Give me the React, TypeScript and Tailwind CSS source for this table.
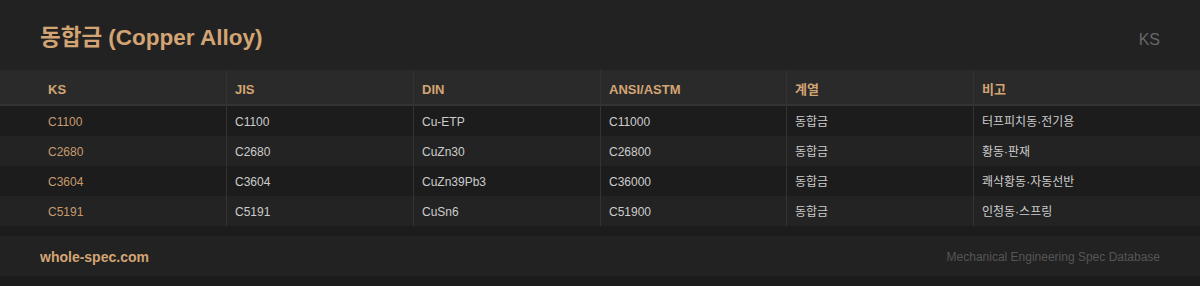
import React from "react";

const rows = [
  ["C1100", "C1100", "Cu-ETP", "C11000", "동합금", "터프피치동·전기용"],
  ["C2680", "C2680", "CuZn30", "C26800", "동합금", "황동·판재"],
  ["C3604", "C3604", "CuZn39Pb3", "C36000", "동합금", "쾌삭황동·자동선반"],
  ["C5191", "C5191", "CuSn6", "C51900", "동합금", "인청동·스프링"],
];
const heads = ["KS", "JIS", "DIN", "ANSI/ASTM", "계열", "비고"];
const cols = "grid grid-cols-[226px_187px_187px_186px_187px_227px]";

export default function App() {
  return (
    <div
      className="w-[1200px] h-[286px] bg-[#1c1c1c] flex flex-col"
      style={{ fontFamily: '"Liberation Sans", "Noto Sans CJK KR", sans-serif' }}
    >
      <div className="h-[70px] bg-[#222222] flex items-baseline justify-between px-10 pt-[22px]">
        <div className="text-[22.5px] leading-[32px] font-bold text-[#d4a574]">동합금 (Copper Alloy)</div>
        <div className="text-[16px] text-[#666666]">KS</div>
      </div>
      <div className={`${cols} h-[36px] bg-[#2a2a2a] border-b-2 border-[#333333]`}>
        {heads.map((h, i) => (
          <div
            key={h}
            className={`flex items-center pt-[5px] text-[13px] font-bold text-[#d4a574] ${i === 0 ? "pl-12" : "pl-2 border-l border-[#333333]"}`}
          >
            {h}
          </div>
        ))}
      </div>
      {rows.map((r, ri) => (
        <div key={ri} className={`${cols} h-[30px] ${ri % 2 === 0 ? "bg-[#1c1c1c]" : "bg-[#232323]"}`}>
          {r.map((c, i) => (
            <div
              key={i}
              className={`flex items-center pt-[2px] text-[12px] ${i === 0 ? "pl-12 text-[#c79b6e]" : "pl-2 border-l border-[#333333] text-[#cccccc]"}`}
            >
              {c}
            </div>
          ))}
        </div>
      ))}
      <div className="mt-[10px] h-[40px] bg-[#222222] flex items-center justify-between px-10 pt-[2px]">
        <div className="text-[14px] font-bold text-[#d4a574]">whole-spec.com</div>
        <div className="text-[12px] text-[#555555]">Mechanical Engineering Spec Database</div>
      </div>
    </div>
  );
}
